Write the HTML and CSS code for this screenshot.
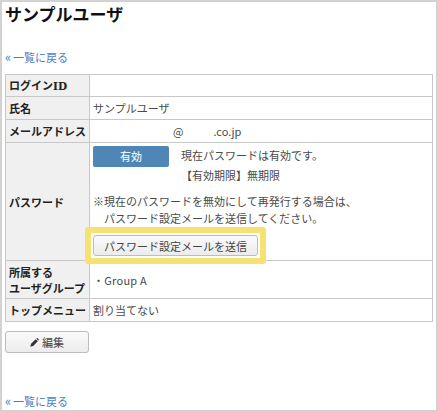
FILE: index.html
```html
<!DOCTYPE html>
<html lang="ja">
<head>
<meta charset="utf-8">
<title>サンプルユーザ</title>
<link rel="stylesheet" href="styles.css">
</head>
<body>
<div class="frame">
  <h1 class="title">サンプルユーザ</h1>
  <a class="back back-top" href="#"><span class="raquo">«</span>一覧に戻る</a>
  <table class="info">
    <tr class="r1"><th>ログイン<span class="latin">ID</span></th><td></td></tr>
    <tr class="r2"><th>氏名</th><td>サンプルユーザ</td></tr>
    <tr class="r3"><th>メールアドレス</th><td><span class="mail-a">@</span><span class="mail-b">.co.jp</span></td></tr>
    <tr class="r4"><th>パスワード</th><td class="pw">
      <div class="status">
        <span class="badge">有効</span>
        <div class="status-text">
          <p>現在パスワードは有効です。</p>
          <p>【有効期限】無期限</p>
        </div>
      </div>
      <p class="note">※現在のパスワードを無効にして再発行する場合は、<br><span class="indent">パスワード設定メールを送信してください。</span></p>
      <button class="btn send" type="button">パスワード設定メールを送信</button>
    </td></tr>
    <tr class="r5"><th>所属する<br>ユーザグループ</th><td class="group">・Group A</td></tr>
    <tr class="r6"><th>トップメニュー</th><td>割り当てない</td></tr>
  </table>
  <button class="btn edit" type="button">
    <svg class="pencil" viewBox="0 0 12 12" width="9" height="9" aria-hidden="true"><path d="M0.5 11.5 L1.4 7.8 L7.6 1.6 L10.4 4.4 L4.2 10.6 Z M8.4 0.9 L9.2 0.3 Q9.8 0 10.3 0.4 L11.6 1.7 Q12 2.3 11.6 2.8 L11.1 3.6 Z" fill="#333"/></svg>編集
  </button>
  <a class="back back-bottom" href="#"><span class="raquo">«</span>一覧に戻る</a>
</div>
</body>
</html>
```
FILE: styles.css
```css
* { box-sizing: border-box; }
html, body { margin: 0; padding: 0; background: #fff; }
body {
  font-family: "Noto Sans CJK JP", "Noto Sans", sans-serif;
  font-size: 11px;
  color: #4a4a4a;
}
.frame {
  width: 438px;
  height: 412px;
  border: 2px solid #d2d2d2;
  padding: 0 3px;
  display: flex;
  flex-direction: column;
  align-items: flex-start;
}
.title {
  margin: 0;
  padding-top: 1px;
  font-size: 17px;
  line-height: 22px;
  font-weight: 700;
  color: #111;
}
.back {
  font-size: 11px;
  line-height: 16px;
  color: #4a7fc8;
  text-decoration: none;
}
.raquo { display: inline-block; width: 8px; font-size: 13px; line-height: 14px; }
.back-top { margin-top: 24px; }
.info {
  margin-top: 9px;
  width: 428px;
  border-collapse: collapse;
  table-layout: fixed;
}
.info th, .info td {
  border: 1px solid #c8c8c8;
  padding: 0 3px;
  line-height: 16px;
}
.info th {
  width: 84px;
  background: #f0f0f0;
  text-align: left;
  font-weight: 700;
  color: #222;
  white-space: nowrap;
}
.latin { font-family: "DejaVu Serif", serif; font-size: 10.5px; }
.info td { background: #fff; }
.r1 { height: 22px; }
.r2 { height: 23px; }
.r3 { height: 23px; }
.r4 { height: 118px; }
.r5 { height: 38px; }
.r6 { height: 23px; }
.mail-a { margin-left: 80px; }
.mail-b { margin-left: 30px; }
.info td.pw { padding: 3px 0 0 3px; vertical-align: top; }
.status { display: flex; align-items: flex-start; }
.badge {
  width: 76px;
  height: 21px;
  background: #4f86b5;
  border-radius: 2px;
  color: #e8f0f6;
  text-align: center;
  font-weight: 500;
  line-height: 20px;
}
.status-text { margin: 2px 0 0 12px; }
.status-text p { margin: 0 0 5px; line-height: 15px; }
.status-text p:last-child { margin-bottom: 0; }
.note { margin: 10px 0 0; line-height: 17px; }
.indent { padding-left: 11px; }
.btn {
  font-family: inherit;
  font-size: 11px;
  color: #444;
  background: linear-gradient(#fafafa, #ececec);
  border: 1px solid #bdbdbd;
  border-radius: 3px;
  padding: 0;
}
.send {
  display: block;
  position: relative;
  width: 165px;
  height: 21px;
  margin-top: 8px;
}
.send::after {
  content: "";
  position: absolute;
  inset: -9px;
  border: 6px solid #f5e272;
  border-radius: 3px;
  pointer-events: none;
}
.group { letter-spacing: 0.25px; }
.edit {
  margin-top: 9px;
  width: 84px;
  height: 22px;
  display: flex;
  align-items: center;
  justify-content: center;
  gap: 3px;
}
.back-bottom { margin-top: auto; margin-bottom: 1px; }
```
